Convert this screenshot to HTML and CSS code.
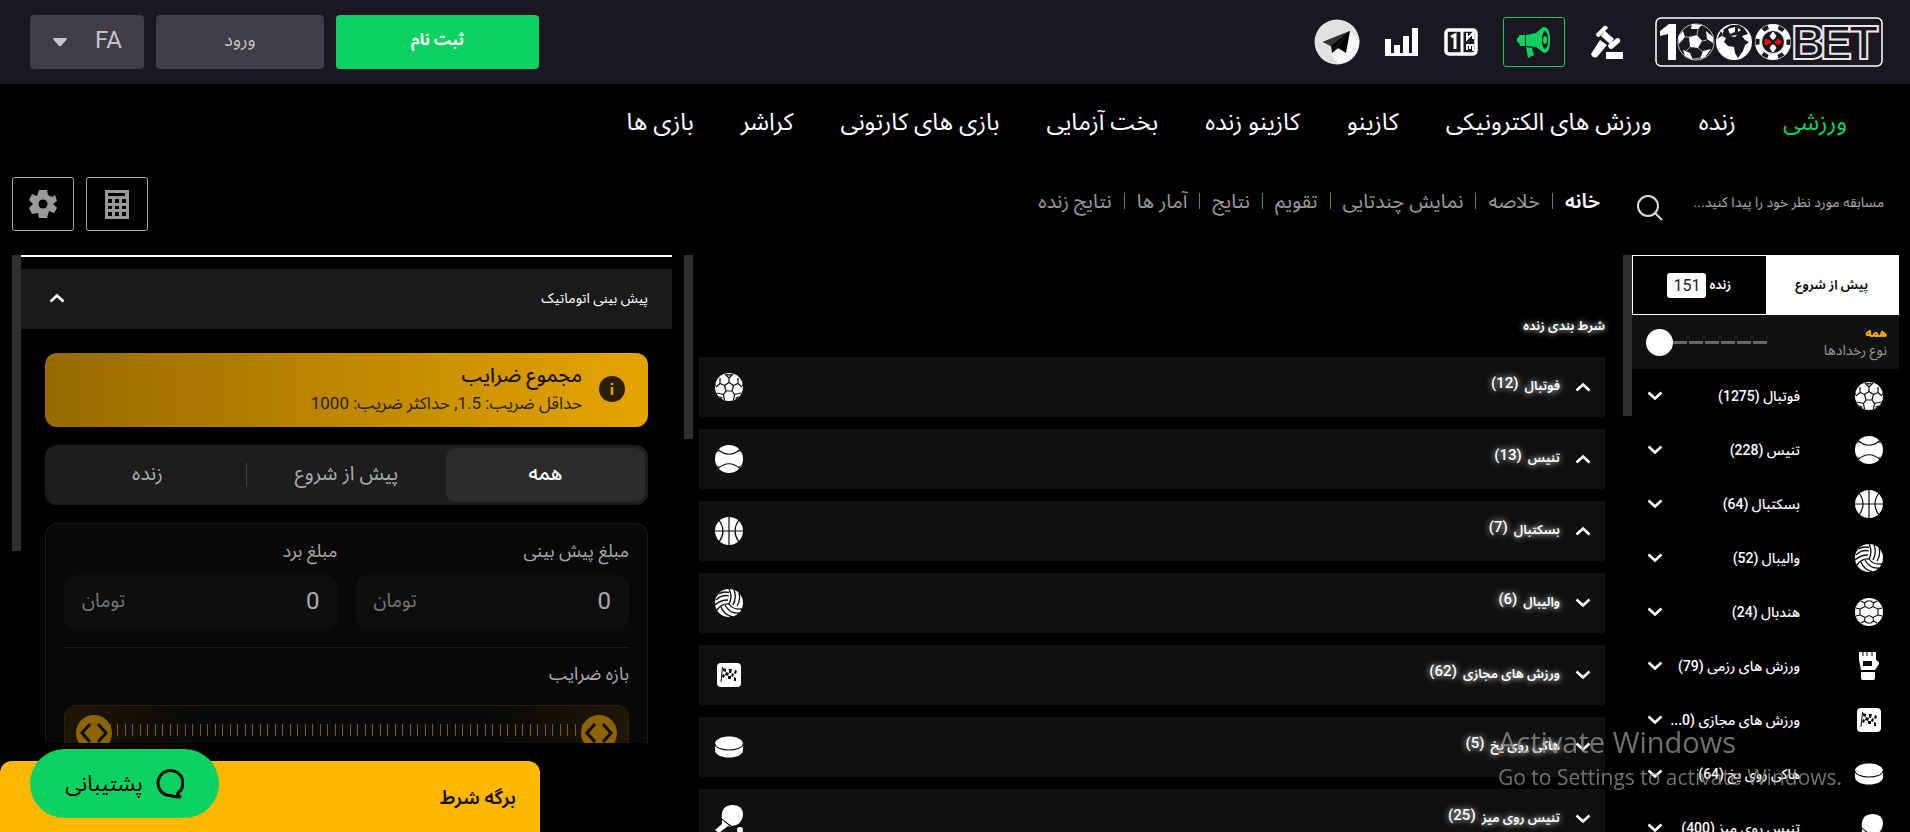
FILE: index.html
```html
<!DOCTYPE html>
<html lang="fa" dir="rtl">
<head>
<meta charset="utf-8">
<title>1000BET</title>
<link rel="stylesheet" href="styles.css">
</head>
<body>
<svg class="sprite" aria-hidden="true">
  <symbol id="down" viewBox="0 0 16 10"><path d="M1.500 1.500 8 7.500 14.500 1.500" fill="none" stroke="currentColor" stroke-width="2.600"/></symbol>
  <symbol id="up" viewBox="0 0 16 10"><path d="M1.500 8.500 8 2.500 14.500 8.500" fill="none" stroke="currentColor" stroke-width="2.600"/></symbol>
  <symbol id="football" viewBox="0 0 28 28">
    <circle cx="14" cy="14" r="14" fill="#fff"/>
    <path d="M14 9.500 18.500 12.500 17 18H11L9.500 12.500ZM14 9.500V5L10 1M14 5 18 1M9.500 12.500 5 10.500 1 14M5 10.500 5 5M18.500 12.500 23 10.500 27 14M23 10.500V5M11 18 8.500 21.500 9.500 27M8.500 21.500 2 20M17 18 19.500 21.500 18.500 27M19.500 21.500 26 20" fill="none" stroke="#0c0c0c" stroke-width="1.200"/>
    <path d="M11 0.500Q14 2 17 0.500L16 2Q14 3 12 2ZM4 23 8 25 6 26ZM24 23 20 25 22 26ZM1 9 1 13 0 13ZM27 9 27 13 28 13Z" fill="#0c0c0c"/>
  </symbol>
  <symbol id="tennis" viewBox="0 0 28 28">
    <circle cx="14" cy="14" r="14" fill="#fff"/>
    <path d="M3 4.500Q14 14 25 4.500M3 23.500Q14 14 25 23.500" fill="none" stroke="#0c0c0c" stroke-width="1.200"/>
    <path d="M1 4 5 6 3 8ZM27 4 23 6 25 8ZM1 24 5 22 3 20ZM27 24 23 22 25 20Z" fill="#0c0c0c" opacity=".5"/>
  </symbol>
  <symbol id="basketball" viewBox="0 0 28 28">
    <circle cx="14" cy="14" r="14" fill="#fff"/>
    <path d="M0 14H28M14 0V28M4 3Q12 14 4 25M24 3Q16 14 24 25" fill="none" stroke="#0c0c0c" stroke-width="1.200"/>
  </symbol>
  <symbol id="volleyball" viewBox="0 0 28 28">
    <circle cx="14" cy="14" r="14" fill="#fff"/>
    <path d="M14 15Q18 8 14 0M18 16Q22 8 19 1M22 17Q26 11 24 4M14 15Q7 14 2 21M13 11Q5 11 0 16M14 7Q7 5 1 11M14 3.500Q8 2 4 5M14 15Q18 21 27 20M10 16Q15 25 24 24M6 18Q9 26 18 28" fill="none" stroke="#0c0c0c" stroke-width="1.300"/>
  </symbol>
  <symbol id="handball" viewBox="0 0 28 28">
    <circle cx="14" cy="14" r="14" fill="#fff"/>
    <path d="M5 11 10 8.500 14 10.500 18 8.500 23 11V17L18 19.500 14 17.500 10 19.500 5 17ZM10 8.500 9.500 5 12 3H16L18.500 5 18 8.500M10 19.500 9.500 23 12 25H16L18.500 23 18 19.500M5 11 1 10M5 17 1 18M23 11 27 10M23 17 27 18M9.500 5 6 3M18.500 5 22 3M9.500 23 6 25M18.500 23 22 25" fill="none" stroke="#0c0c0c" stroke-width="1.100"/>
  </symbol>
  <symbol id="glove" viewBox="0 0 28 28">
    <path d="M4 0H21V8L24 10V12L20 18H6L4 8ZM6 20H20V26Q20 28 18 28H8Q6 28 6 26Z" fill="#fff"/>
    <path d="M8 9H17V14H8Z" fill="#0c0c0c"/><path d="M8 0V4M12 0V4M17 0V4" stroke="#0c0c0c"/>
  </symbol>
  <symbol id="flag" viewBox="0 0 28 28">
    <rect x="2" y="2" width="24" height="24" rx="4" fill="#fff"/>
    <path d="M7.500 6 6 21" stroke="#0c0c0c"/>
    <path d="M8 7 11 8V11L8 10ZM11 11 14 12 13 15 10 14ZM8 13 10 14 9 17 7 16ZM14 8 17 8 16 12 14 12ZM17 12 19 13 18 16 16 15ZM20 9 22 10 21 13 19 12ZM13 15 16 15 16 18 13 18ZM19 16 21 17V20H19Z" fill="#0c0c0c"/>
  </symbol>
  <symbol id="puck" viewBox="0 0 28 28">
    <path d="M0 11C0 1 28 1 28 11V17C28 27 0 27 0 17Z" fill="#fff"/>
    <path d="M0 11C1 19 27 19 28 11" fill="none" stroke="#0c0c0c" stroke-width="1.200"/>
  </symbol>
  <symbol id="pingpong" viewBox="0 0 28 28">
    <path d="M7 15Q5 0 18 0 28 0 28 10 27 20 17 21Z" fill="#fff"/><path d="M7 15 16 22 13 21 4 28 0 25 7 19Z" fill="#fff"/><path d="M7 14 17 22" stroke="#0c0c0c"/><circle cx="25" cy="25" r="3" fill="#fff"/>
  </symbol>
</svg>

<header class="topbar">
  <a class="logo" href="#" aria-label="1000BET">
    <svg width="228" height="50" viewBox="0 0 228 50" direction="ltr">
      <rect x="1" y="1" width="226" height="48" rx="5" fill="none" stroke="#fff" stroke-width="1.500"/>
      <path d="M5 14 14 7H21V43H13V17L5 19Z" fill="#fff"/>
      <circle cx="41" cy="25" r="18" fill="#1a1721" stroke="#bbb" stroke-width="1"/>
      <path d="M34 20 42 18 47 24 43 31 35 30ZM37 7 47 8 43 12 36 12ZM51 14 58 20 58 26 52 22ZM48 34 56 32 50 40 45 42ZM28 33 35 36 38 43 30 39ZM23 20 28 14 30 20 24 27Z" fill="#fff"/>
      <path d="M34 20 30 20M42 18 43 12M47 24 52 23M43 31 48 35M35 30 31 34M38 42 45 41" stroke="#aaa" stroke-width="1"/>
      <circle cx="79" cy="25" r="18" fill="#fff"/>
      <path d="M69 12 76 8 84 8 89 11 93 17 87 19 90 23 94 25 90 28 88 34 83 41 80 36 79 30 73 29 69 25 71 21 67 19ZM66 14 62 22 68 18Z" fill="#1a1721"/>
      <path d="M73 12 80 10 80 15 75 17ZM83 11 86 13 83 15ZM75 19 82 18 80 20Z" fill="#fff"/>
      <circle cx="118" cy="25" r="18" fill="#fff"/>
      <circle cx="118" cy="25" r="15.500" fill="none" stroke="#1a1721" stroke-width="4" stroke-dasharray="6 10.200" stroke-dashoffset="3"/>
      <circle cx="118" cy="25" r="11.500" fill="#1a1721" stroke="#fff"/>
      <path d="M118 15 121 19 119 22H117L115 19ZM118 35 121 31 119 28H117L115 31Z" fill="#fff" stroke="#fff"/>
      <path d="M110 23 112 22 116 25 112 28 110 27ZM120 25 123 22 127 25 123 28Z" fill="#f00" stroke="#f00"/>
      <g class="logo-text"><text x="136" y="42">B</text><text x="165" y="42">E</text><text x="194" y="42">T</text></g>
    </svg>
  </a>
  <nav class="tools" aria-label="ابزارها">
    <button class="tool" aria-label="مزایده"><svg width="34" height="34" viewBox="0 0 34 34" fill="#fff"><path d="M6 9 14 1Q17 0 18 3L9 12Q6 12 6 9ZM15 6 24 14 20 19 11 11ZM18 20 27 13Q31 13 30 17L22 24Q18 24 18 20ZM10 15 17 20 7 32Q3 34 1 29ZM16 27H33V34H16Z"/></svg></button>
    <button class="tool promo" aria-label="تبلیغات"><svg width="34" height="32" viewBox="0 0 34 32" fill="#09d261"><path d="M2 9H8V20H3L2 17 0 16V12L2 11ZM9 9 19 7 26 1Q33 0 33 14T27 27L19 21 9 20ZM9 21 15 22 17 29 11 32Z"/><ellipse cx="28" cy="14" rx="3" ry="9" fill="#1a1721"/><ellipse cx="28" cy="14" rx="2" ry="4"/></svg></button>
    <button class="tool" aria-label="نتایج"><svg width="34" height="28" viewBox="0 0 34 28"><rect x="2" y="2" width="30" height="24" rx="3" fill="none" stroke="#fff" stroke-width="3.500"/><path d="M18 2V26M7 9 11 7V21" fill="none" stroke="#fff" stroke-width="3"/><path d="M23 5V11L29 5V11M23 22V17H26V21M26 17H29V23" fill="none" stroke="#fff" stroke-width="2"/></svg></button>
    <button class="tool" aria-label="آمار"><svg width="34" height="28" viewBox="0 0 34 28" fill="#fff"><path d="M0 11H6V25H9V17H15V25H18V8H24V25H27V0H33V28H0Z"/></svg></button>
    <button class="tool" aria-label="تلگرام"><svg width="46" height="46" viewBox="0 0 46 46"><circle cx="23" cy="23" r="22.500" fill="#e1e1e1"/><path d="M36 12 45 20A22 22 0 0 1 24 45L15 32Z" fill="#f7f5f5"/><path d="M9 23 36 12 32 34 24 29 18 34 17 27Z" fill="#000"/><path d="M9 23 36 12 17 27Z" fill="#333"/><path d="M18 34 20 28 36 12 24 29Z" fill="#111"/></svg></button>
  </nav>
  <div class="account">
    <button class="btn register">ثبت نام</button>
    <button class="btn login">ورود</button>
    <div class="lang">
      <select aria-label="زبان"><option>FA</option></select>
      <svg width="14" height="8" viewBox="0 0 14 8"><path d="M1 0H13L14 1 8 8H6L0 1Z" fill="#c5c4c8"/></svg>
    </div>
  </div>
</header>

<nav class="mainnav" aria-label="منوی اصلی">
  <a class="current" href="#">ورزشی</a><a href="#">زنده</a><a href="#">ورزش های الکترونیکی</a><a href="#">کازینو</a><a href="#">کازینو زنده</a><a href="#">بخت آزمایی</a><a href="#">بازی های کارتونی</a><a href="#">کراشر</a><a href="#">بازی ها</a>
</nav>

<div class="subbar">
  <div class="search">
    <input type="text" placeholder="مسابقه مورد نظر خود را پیدا کنید..." aria-label="جستجو">
    <button aria-label="جستجو"><svg width="26" height="26" viewBox="0 0 26 26" fill="none" stroke="#ddd" stroke-width="2"><circle cx="11" cy="11" r="10"/><path d="M18 18 25 25"/></svg></button>
  </div>
  <nav class="subnav" aria-label="بخش ها">
    <a class="current" href="#">خانه</a><a href="#">خلاصه</a><a href="#">نمایش چندتایی</a><a href="#">تقویم</a><a href="#">نتایج</a><a href="#">آمار ها</a><a href="#">نتایج زنده</a>
  </nav>
  <div class="subtools">
    <button aria-label="ماشین حساب"><svg width="24" height="29" viewBox="0 0 24 29"><path d="M0 0H24V29H0Z" fill="#999"/><path d="M3 3H20V6H3ZM3 9H7V13H3ZM10 9H14V13H10ZM17 9H21V13H17ZM3 16H7V19H3ZM10 16H14V19H10ZM17 16H21V19H17ZM3 22H7V26H3ZM10 22H14V26H10ZM17 22H21V26H17Z" fill="#000"/></svg></button>
    <button aria-label="تنظیمات"><svg width="28" height="28" viewBox="0 0 28 28"><path d="M10 0H18L19 5 23 7 26 5 28 11 24 14 28 18 25 23 20 21 18 28H10L9 23 3 24 0 18 4 14 0 10 3 4 8 6Z" fill="#999"/><circle cx="14" cy="14" r="4.500" fill="#000"/></svg></button>
  </div>
</div>

<main class="board">
  <aside class="sports">
    <div class="phase">
      <button class="on">پیش از شروع</button>
      <button>زنده <span class="count">151</span></button>
    </div>
    <div class="kind">
      <label for="kind"><b>همه</b><span>نوع رخدادها</span></label>
      <input id="kind" type="range" min="0" max="6" value="0" dir="ltr">
    </div>
    <ul class="sportlist">
      <li><svg class="ball"><use href="#football"/></svg><span>فوتبال (1275)</span><svg class="chev"><use href="#down"/></svg></li>
      <li><svg class="ball"><use href="#tennis"/></svg><span>تنیس (228)</span><svg class="chev"><use href="#down"/></svg></li>
      <li><svg class="ball"><use href="#basketball"/></svg><span>بسکتبال (64)</span><svg class="chev"><use href="#down"/></svg></li>
      <li><svg class="ball"><use href="#volleyball"/></svg><span>والیبال (52)</span><svg class="chev"><use href="#down"/></svg></li>
      <li><svg class="ball"><use href="#handball"/></svg><span>هندبال (24)</span><svg class="chev"><use href="#down"/></svg></li>
      <li><svg class="ball"><use href="#glove"/></svg><span>ورزش های رزمی (79)</span><svg class="chev"><use href="#down"/></svg></li>
      <li><svg class="ball"><use href="#flag"/></svg><span>ورزش های مجازی (0...</span><svg class="chev"><use href="#down"/></svg></li>
      <li><svg class="ball"><use href="#puck"/></svg><span>هاکی روی یخ (64)</span><svg class="chev"><use href="#down"/></svg></li>
      <li><svg class="ball"><use href="#pingpong"/></svg><span>تنیس روی میز (400)</span><svg class="chev"><use href="#down"/></svg></li>
    </ul>
  </aside>
  <div class="scroll s1"></div>

  <section class="live">
    <h2>شرط بندی زنده</h2>
    <button class="event"><svg class="chev"><use href="#up"/></svg><span>فوتبال</span><sup>(12)</sup><svg class="ball"><use href="#football"/></svg></button>
    <button class="event"><svg class="chev"><use href="#up"/></svg><span>تنیس</span><sup>(13)</sup><svg class="ball"><use href="#tennis"/></svg></button>
    <button class="event"><svg class="chev"><use href="#up"/></svg><span>بسکتبال</span><sup>(7)</sup><svg class="ball"><use href="#basketball"/></svg></button>
    <button class="event"><svg class="chev"><use href="#down"/></svg><span>والیبال</span><sup>(6)</sup><svg class="ball"><use href="#volleyball"/></svg></button>
    <button class="event"><svg class="chev"><use href="#down"/></svg><span>ورزش های مجازی</span><sup>(62)</sup><svg class="ball"><use href="#flag"/></svg></button>
    <button class="event"><svg class="chev"><use href="#down"/></svg><span>هاکی روی یخ</span><sup>(5)</sup><svg class="ball"><use href="#puck"/></svg></button>
    <button class="event"><svg class="chev"><use href="#down"/></svg><span>تنیس روی میز</span><sup>(25)</sup><svg class="ball"><use href="#pingpong"/></svg></button>
  </section>
  <div class="scroll s2"></div>

  <section class="auto">
    <button class="autohead"><span>پیش بینی اتوماتیک</span><svg class="chev"><use href="#up"/></svg></button>
    <div class="autobody">
      <div class="banner">
        <svg width="26" height="26" viewBox="0 0 26 26"><circle cx="13" cy="13" r="13" fill="#2a1f00"/><path d="M13 11V19M13 7V9" stroke="#dc9f00" stroke-width="2.500"/></svg>
        <div><strong>مجموع ضرایب</strong><span>حداقل ضریب: 1.5, حداکثر ضریب: 1000</span></div>
      </div>
      <div class="tabs"><button class="on">همه</button><button>پیش از شروع</button><button>زنده</button></div>
      <div class="form">
        <div class="fields">
          <div class="field"><label for="stake">مبلغ پیش بینی</label><div class="box"><input id="stake" type="text" value="0"><span>تومان</span></div></div>
          <div class="field"><label for="win">مبلغ برد</label><div class="box"><input id="win" type="text" value="0"><span>تومان</span></div></div>
        </div>
        <label class="rangelabel" for="low">بازه ضرایب</label>
        <div class="range">
          <svg class="ticks"><defs><pattern id="tk" width="15" height="12" patternUnits="userSpaceOnUse"><path d="M0 0H1V12H0ZM7 0H8V12H7Z" fill="#805a00"/></pattern></defs><rect width="100%" height="12" fill="url(#tk)"/></svg>
          <input id="low" type="range" dir="ltr" value="0"><input type="range" dir="ltr" value="100" aria-label="حداکثر ضریب">
        </div>
      </div>
    </div>
  </section>
  <div class="scroll s3"></div>
</main>

<button class="slip">برگه شرط</button>
<button class="support"><svg width="29" height="32" viewBox="0 0 29 32"><path d="M23 25A12.500 12.500 0 1 0 15 27.500Q20 29 26 29Q22 28 23 25Z" fill="none" stroke="#000" stroke-width="3"/></svg><span>پشتیبانی</span></button>
<div class="watermark" dir="ltr"><p>Activate Windows</p><p class="small">Go to Settings to activate Windows.</p></div>
</body>
</html>
```
FILE: styles.css
```css
* { box-sizing: border-box; }
body {
  margin: 0;
  height: 100vh;
  display: flex;
  flex-direction: column;
  overflow: hidden;
  background: #000;
  color: #fff;
  font: 16px/24px Roboto, "Noto Sans Arabic", "DejaVu Sans Condensed", "DejaVu Sans", sans-serif;
}
button, input, select { font: inherit; color: inherit; background: none; border: 0; padding: 0; margin: 0; }
a { color: inherit; text-decoration: none; }
svg { display: block; flex: none; }
.sprite { position: absolute; width: 0; height: 0; }
.ball { width: 28px; height: 28px; }
.chev { width: 16px; height: 10px; }

.topbar { flex: none; height: 84px; background: #1a1721; display: flex; align-items: center; padding: 0 27px 0 30px; }
.logo-text { font: bold 48px "Liberation Sans", sans-serif; fill: #1a1721; stroke: #e8e8e8; stroke-width: 2; }
.tools { display: flex; align-items: center; gap: 25px; margin-right: 31px; }
.promo { width: 62px; height: 50px; border: 1px solid #09d261; border-radius: 3px; display: grid; place-items: center; }
.account { display: flex; gap: 12px; margin-right: auto; }
.btn { height: 54px; border-radius: 4px; padding-bottom: 4px; background: #403d47; color: #c5c4c8; }
.register { width: 203px; background: #09d261; color: #fff; font-weight: bold; }
.login { width: 168px; font-size: 18px; }
.lang { position: relative; width: 114px; height: 54px; }
.lang select { appearance: none; width: 100%; height: 100%; border-radius: 4px; background: #403d47; color: #c5c4c8; font-size: 24px; padding: 0 22px 4px; }
.lang svg { position: absolute; left: 23px; top: 23px; }

.mainnav { flex: none; height: 84px; display: flex; align-items: center; gap: 47px; padding: 0 63px 8px; font-size: 24px; line-height: 36px; white-space: nowrap; }
.mainnav .current { color: #09d261; }

.subbar { flex: none; height: 87px; display: flex; align-items: flex-start; padding: 9px 26px 0 12px; }
.search { display: flex; width: 247px; height: 54px; align-items: center; justify-content: space-between; }
.search input { width: 200px; font-size: 14px; padding-bottom: 4px; }
.search input::placeholder { color: #aaa; opacity: 1; }
.search button { padding-top: 8px; }
.subnav { display: flex; margin-right: 37px; padding-top: 12px; font-size: 20px; color: #999; white-space: nowrap; }
.subnav a + a { display: flex; align-items: center; }
.subnav a + a::before { content: ""; width: 1px; height: 16px; background: #777; margin: 0 12px; }
.subnav .current { color: #fff; font-weight: 600; }
.subtools { display: flex; gap: 12px; margin-right: auto; }
.subtools button { width: 62px; height: 54px; border: 1px solid #aaa; border-radius: 3px; display: grid; place-items: center; }

.board { flex: 1; min-height: 0; display: flex; padding: 0 11px 0 12px; overflow: hidden; }
.scroll { flex: none; width: 9px; background: #303030; }
.s1 { height: 161px; }
.s2 { height: 184px; }
.s3 { height: 296px; }

.sports { flex: 0 0 267px; }
.phase { display: flex; height: 60px; border: 1px solid #fff; }
.phase button { flex: 1 1 0; font-size: 13px; font-weight: 600; display: flex; align-items: center; justify-content: center; gap: 3px; }
.phase .on { background: #fff; color: #000; }
.count { background: #fff; color: #222; font-size: 16px; font-weight: normal; border-radius: 3px; width: 39px; line-height: 25px; }
.kind { height: 54px; background: #111; display: flex; align-items: center; justify-content: space-between; padding: 0 12px 0 14px; }
.kind label { display: flex; flex-direction: column; font-size: 12px; line-height: 17px; }
.kind b { color: #ffb400; }
.kind span { color: #999; font-size: 14px; }
.kind input { appearance: none; width: 121px; height: 27px; background: repeating-linear-gradient(90deg, #666 0 14px, transparent 14px 16px) 27px 12px / 94px 3px no-repeat; }
.kind input::-webkit-slider-thumb { appearance: none; width: 27px; height: 27px; border-radius: 50%; background: #fff; }
.sportlist { list-style: none; margin: 0; padding: 0; }
.sportlist li { height: 54px; display: flex; align-items: center; padding: 0 16px 0 15px; font-size: 14px; font-weight: 500; }
.sportlist span { margin-right: 55px; flex: 1; white-space: nowrap; }

.live { flex: 1; padding: 59px 18px 0 6px; display: flex; flex-direction: column; gap: 12px; }
.live h2 { margin: 0 0 7px; font-size: 13px; font-weight: 600; line-height: 24px; text-shadow: 0 0 6px #fff; }
.event { flex: none; height: 60px; background: #101010; display: flex; align-items: center; padding: 0 14px 0 16px; font-size: 13px; font-weight: 600; text-shadow: 0 0 6px #fff; }
.event span { margin-right: 15px; padding-bottom: 2px; }
.event sup { margin-right: 6px; padding-bottom: 8px; font-size: 15px; font-weight: 500; line-height: 18px; }
.event .ball { margin-right: auto; }

.auto { flex: 0 0 651px; margin-right: 12px; height: 488px; overflow: hidden; border-top: 2px solid #fff; padding-top: 12px; }
.autohead { width: 100%; height: 60px; background: #1a1a1a; padding: 0 24px 2px 28px; display: flex; align-items: center; justify-content: space-between; font-size: 14px; }
.autobody { padding: 24px 24px 0; display: flex; flex-direction: column; gap: 18px; }
.banner { height: 74px; border-radius: 12px; background: linear-gradient(270deg, #e5a500, #966a00); color: #1a1200; display: flex; align-items: center; gap: 17px; padding: 0 23px 2px; }
.banner div { display: flex; flex-direction: column; line-height: 28px; }
.banner strong { font-size: 20px; font-weight: 500; }
.banner span { font-size: 17px; color: #2a1f00; }
.tabs { height: 60px; border-radius: 12px; background: #1d1d1d; display: flex; padding: 3px; color: #aaa; font-size: 20px; }
.tabs button { flex: 1 1 0; border-radius: 10px; padding-bottom: 4px; }
.tabs .on { background: #2b2b2b; color: #fff; font-weight: 500; }
.tabs button:last-child { background: linear-gradient(#444, #444) right center / 1px 24px no-repeat; }
.form { border: 1px solid #1c1c1c; border-radius: 12px; background: #080808; padding: 14px 18px 40px; }
.fields { display: flex; gap: 18px; padding-bottom: 18px; border-bottom: 1px solid #1c1c1c; }
.field { flex: 1 1 0; min-width: 0; }
.field label, .rangelabel { display: block; line-height: 26px; color: #aaa; font-size: 18px; }
.box { height: 54px; margin-top: 11px; border-radius: 12px; background: #0e0e0e; display: flex; align-items: center; padding: 0 18px 3px; color: #aaa; }
.box input { flex: 1 1 0; width: 0; min-width: 0; font-size: 24px; }
.box span { color: #777; font-size: 19px; }
.rangelabel { margin-top: 13px; }
.range { position: relative; height: 56px; margin-top: 18px; border: 1px solid #2e2306; border-radius: 12px; background: linear-gradient(90deg, #1f1606, #080808 25%, #080808 75%, #1f1606); }
.ticks { width: calc(100% - 90px); height: 12px; margin: 18px 45px 0; }
.range input { position: absolute; left: 11px; top: 8px; width: calc(100% - 22px); height: 38px; appearance: none; pointer-events: none; }
.range input::-webkit-slider-thumb { appearance: none; pointer-events: auto; width: 36px; height: 36px; border-radius: 50%; background: #8c6404 url("data:image/svg+xml,%3Csvg xmlns='http://www.w3.org/2000/svg' viewBox='0 0 36 36'%3E%3Cpath d='M14 9 6 18 14 27M22 9 30 18 22 27' fill='none' stroke='%23110c00' stroke-width='3'/%3E%3C/svg%3E"); }

.slip { position: fixed; left: 0; bottom: 0; width: 540px; height: 71px; border-radius: 12px 12px 0 0; background: #ffb700; color: #151000; font-size: 19px; font-weight: 600; text-align: right; padding: 2px 24px 0 0; }
.support { position: fixed; left: 30px; bottom: 14px; width: 189px; height: 69px; border-radius: 35px; background: #09d261; color: #000; display: flex; align-items: center; justify-content: center; gap: 12px; font-size: 22px; }
.watermark { position: fixed; left: 1498px; bottom: 38px; color: rgba(150, 150, 150, .75); font-family: "Open Sans", sans-serif; font-size: 29px; line-height: 36px; white-space: nowrap; pointer-events: none; }
.watermark p { margin: 0; }
.watermark .small { font-size: 21px; line-height: 34px; }
```
